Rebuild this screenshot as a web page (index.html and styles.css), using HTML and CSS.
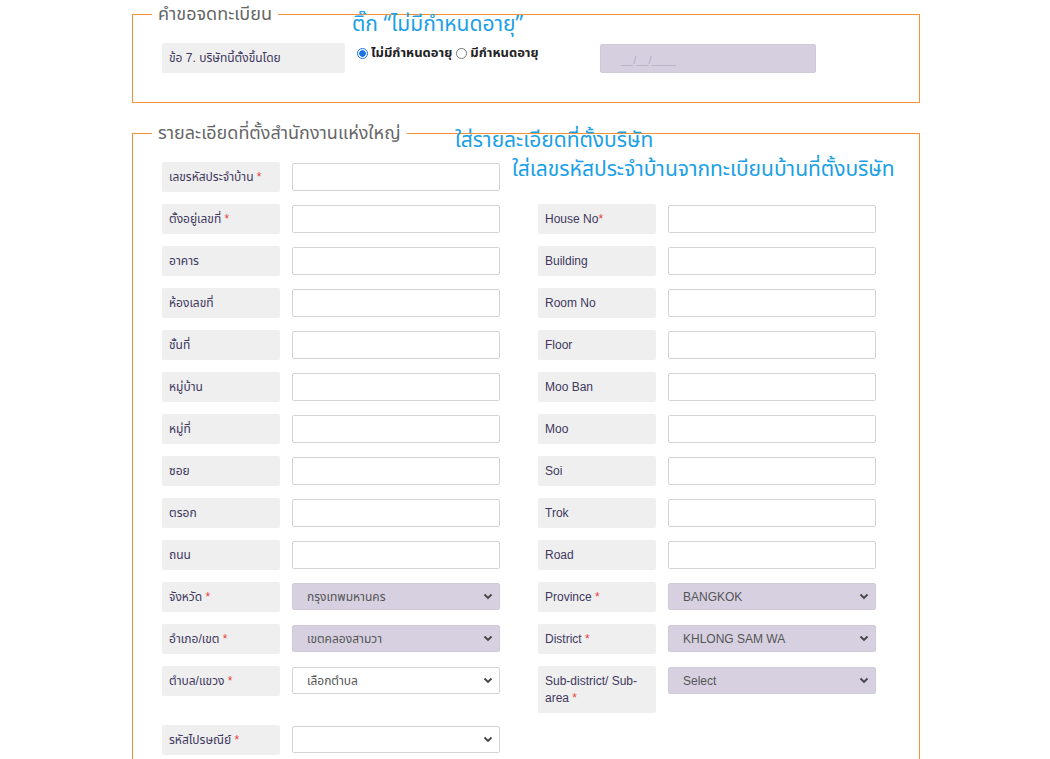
FILE: index.html
```html
<!DOCTYPE html>
<html lang="th">
<head>
<meta charset="utf-8">
<title>คำขอจดทะเบียน</title>
<link rel="stylesheet" href="styles.css">
</head>
<body>
<div class="page">
  <fieldset class="box box-first">
    <legend>คำขอจดทะเบียน</legend>
    <div class="row7">
      <div class="label wide">ข้อ 7. บริษัทนี้ตั้งขึ้นโดย</div>
      <div class="radios">
        <label class="radio"><span class="dot checked"></span>ไม่มีกำหนดอายุ</label>
        <label class="radio"><span class="dot"></span>มีกำหนดอายุ</label>
      </div>
      <div class="date">__/__/____</div>
    </div>
  </fieldset>

  <fieldset class="box box-second">
    <legend>รายละเอียดที่ตั้งสำนักงานแห่งใหญ่</legend>
    <div class="grid">
      <div class="label">เลขรหัสประจำบ้าน <span class="req">*</span></div>
      <div class="input"></div>
      <div></div><div></div>

      <div class="label">ตั้งอยู่เลขที่ <span class="req">*</span></div>
      <div class="input"></div>
      <div class="label">House No<span class="req">*</span></div>
      <div class="input"></div>

      <div class="label">อาคาร</div>
      <div class="input"></div>
      <div class="label">Building</div>
      <div class="input"></div>

      <div class="label">ห้องเลขที่</div>
      <div class="input"></div>
      <div class="label">Room No</div>
      <div class="input"></div>

      <div class="label">ชั้นที่</div>
      <div class="input"></div>
      <div class="label">Floor</div>
      <div class="input"></div>

      <div class="label">หมู่บ้าน</div>
      <div class="input"></div>
      <div class="label">Moo Ban</div>
      <div class="input"></div>

      <div class="label">หมู่ที่</div>
      <div class="input"></div>
      <div class="label">Moo</div>
      <div class="input"></div>

      <div class="label">ซอย</div>
      <div class="input"></div>
      <div class="label">Soi</div>
      <div class="input"></div>

      <div class="label">ตรอก</div>
      <div class="input"></div>
      <div class="label">Trok</div>
      <div class="input"></div>

      <div class="label">ถนน</div>
      <div class="input"></div>
      <div class="label">Road</div>
      <div class="input"></div>

      <div class="label">จังหวัด <span class="req">*</span></div>
      <div class="select filled"><span>กรุงเทพมหานคร</span><svg width="10" height="7" viewBox="0 0 10 7"><path d="M1.5 1.5 L5 5 L8.5 1.5" fill="none" stroke="#444" stroke-width="1.8"/></svg></div>
      <div class="label">Province <span class="req">*</span></div>
      <div class="select filled"><span>BANGKOK</span><svg width="10" height="7" viewBox="0 0 10 7"><path d="M1.5 1.5 L5 5 L8.5 1.5" fill="none" stroke="#444" stroke-width="1.8"/></svg></div>

      <div class="label">อำเภอ/เขต <span class="req">*</span></div>
      <div class="select filled"><span>เขตคลองสามวา</span><svg width="10" height="7" viewBox="0 0 10 7"><path d="M1.5 1.5 L5 5 L8.5 1.5" fill="none" stroke="#444" stroke-width="1.8"/></svg></div>
      <div class="label">District <span class="req">*</span></div>
      <div class="select filled"><span>KHLONG SAM WA</span><svg width="10" height="7" viewBox="0 0 10 7"><path d="M1.5 1.5 L5 5 L8.5 1.5" fill="none" stroke="#444" stroke-width="1.8"/></svg></div>

      <div class="label">ตำบล/แขวง <span class="req">*</span></div>
      <div class="select"><span>เลือกตำบล</span><svg width="10" height="7" viewBox="0 0 10 7"><path d="M1.5 1.5 L5 5 L8.5 1.5" fill="none" stroke="#444" stroke-width="1.8"/></svg></div>
      <div class="label"><span class="line">Sub-district/ Sub-</span><span class="line">area <span class="req">*</span></span></div>
      <div class="select filled"><span>Select</span><svg width="10" height="7" viewBox="0 0 10 7"><path d="M1.5 1.5 L5 5 L8.5 1.5" fill="none" stroke="#444" stroke-width="1.8"/></svg></div>

      <div class="label">รหัสไปรษณีย์ <span class="req">*</span></div>
      <div class="select"><span></span><svg width="10" height="7" viewBox="0 0 10 7"><path d="M1.5 1.5 L5 5 L8.5 1.5" fill="none" stroke="#444" stroke-width="1.8"/></svg></div>
      <div></div><div></div>
    </div>
  </fieldset>

  <div class="note note-1">ติ๊ก “ไม่มีกำหนดอายุ”</div>
  <div class="note note-2">ใส่รายละเอียดที่ตั้งบริษัท</div>
  <div class="note note-3">ใส่เลขรหัสประจำบ้านจากทะเบียนบ้านที่ตั้งบริษัท</div>
</div>
</body>
</html>
```

FILE: styles.css
```css
html, body {
  margin: 0;
  padding: 0;
  background: #ffffff;
  font-family: "Liberation Sans", Arial, "Noto Sans Thai", "Loma", sans-serif;
  overflow: hidden;
  height: 759px;
}

.page {
  position: relative;
  width: 1050px;
  height: 759px;
  padding-top: 4px;
  box-sizing: border-box;
}

.box {
  margin: 0 0 0 132px;
  width: 788px;
  box-sizing: border-box;
  border: 1px solid #f39237;
  padding: 0;
  min-width: 0;
}

.box legend {
  margin-left: -10px;
  padding: 0 6px;
  font-size: 18px;
  line-height: 20px;
  color: #666666;
}

.box-first {
  padding: 19px 29px 29px 29px;
}

.box-second {
  margin-top: 20px;
  padding: 19px 29px 40px 29px;
}

.row7 {
  display: flex;
  align-items: flex-start;
}

.label {
  background: #efefef;
  border-radius: 2px;
  color: #40385e;
  font-size: 12px;
  line-height: 17px;
  padding: 7px 7px 6px 7px;
  min-height: 17px;
}

.label .line {
  display: block;
}

.label.wide {
  width: 169px;
}

.req {
  color: #e8413e;
}

.radios {
  display: flex;
  gap: 4px;
  width: 231px;
  margin-left: 12px;
  margin-top: 2px;
  font-size: 13px;
  font-weight: bold;
  color: #222;
  line-height: 16px;
}

.radio {
  display: flex;
  align-items: center;
  gap: 3px;
}

.dot {
  width: 9px;
  height: 9px;
  border: 1px solid #767676;
  border-radius: 50%;
  background: #fff;
  box-sizing: content-box;
  display: inline-block;
}

.dot.checked {
  border-color: #1a73e8;
  background: radial-gradient(circle, #1a73e8 0 3px, #fff 3.5px);
}

.date {
  margin-left: 12px;
  margin-top: 1px;
  width: 216px;
  height: 29px;
  box-sizing: border-box;
  background: #d5cfe0;
  border: 1px solid #cfcad6;
  border-radius: 2px;
  color: #b4aec2;
  font-size: 11px;
  padding: 9px 0 0 20px;
  line-height: 12px;
}

.grid {
  display: grid;
  grid-template-columns: 118px 12px 208px 38px 118px 12px 208px;
  row-gap: 12px;
  align-items: start;
}

.grid > :nth-child(4n+1) { grid-column: 1; }
.grid > :nth-child(4n+2) { grid-column: 3; }
.grid > :nth-child(4n+3) { grid-column: 5; }
.grid > :nth-child(4n+4) { grid-column: 7; }

.input {
  height: 28px;
  margin-top: 1px;
  box-sizing: border-box;
  border: 1px solid #d4d4d4;
  border-radius: 2px;
  background: #fff;
}

.select {
  height: 27px;
  margin-top: 1px;
  box-sizing: border-box;
  border: 1px solid #d4d4d4;
  border-radius: 2px;
  background: #fff;
  display: flex;
  align-items: center;
  justify-content: space-between;
  padding: 0 6px 0 14px;
  font-size: 12px;
  color: #555;
}

.select.filled {
  background: #d6d0e1;
  border-color: #d0cad9;
}

.note {
  position: absolute;
  color: #1aa0e6;
  font-family: "Noto Sans Thai", "Loma", "Liberation Sans", sans-serif;
  font-size: 21px;
  line-height: 24px;
  white-space: nowrap;
}

.note-1 { left: 352px; top: 13px; }
.note-2 { left: 455px; top: 129px; }
.note-3 { left: 512px; top: 158px; }
```
